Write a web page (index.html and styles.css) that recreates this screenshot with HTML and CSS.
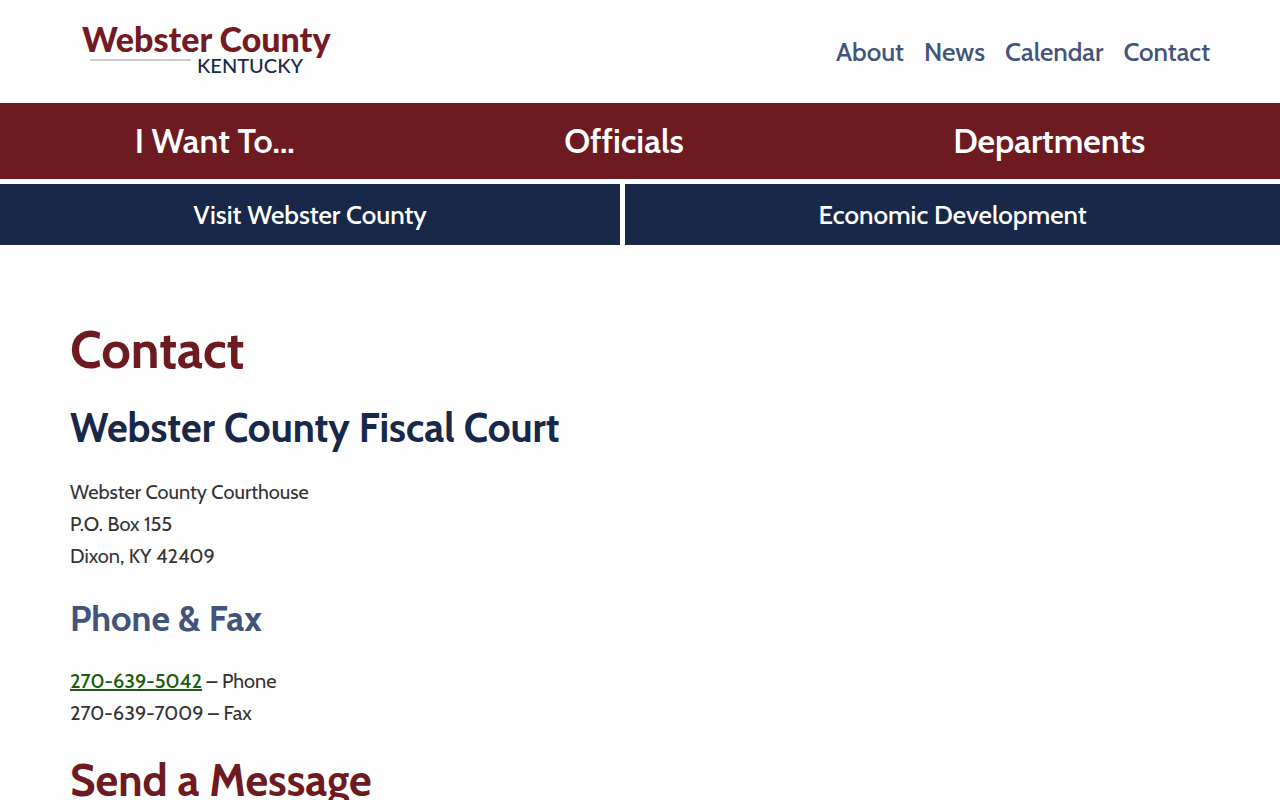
FILE: index.html
```
<!DOCTYPE html>
<html lang="en">
<head>
    <meta charset="UTF-8">
    <meta name="viewport" content="width=device-width, initial-scale=1.0">
    <title>Contact - Webster County, Kentucky</title>
    <link rel="stylesheet" href="styles.css">
</head>
<body>
    <header class="site-header">
        <a class="logo" href="#">
            <span class="logo-name">Webster County</span>
            <span class="logo-state">KENTUCKY</span>
        </a>
        <nav class="top-nav">
            <a href="#">About</a>
            <a href="#">News</a>
            <a href="#">Calendar</a>
            <a href="#">Contact</a>
        </nav>
    </header>

    <nav class="main-nav">
        <a href="#">I Want To...</a>
        <a href="#">Officials</a>
        <a href="#">Departments</a>
    </nav>

    <nav class="sub-nav">
        <a href="#">Visit Webster County</a>
        <a href="#">Economic Development</a>
    </nav>

    <main class="content">
        <h1>Contact</h1>
        <h2>Webster County Fiscal Court</h2>
        <p>Webster County Courthouse<br>
        P.O. Box 155<br>
        Dixon, KY 42409</p>
        <h3>Phone &amp; Fax</h3>
        <p><a href="tel:270-639-5042">270-639-5042</a> – Phone<br>
        270-639-7009 – Fax</p>
        <h2 class="form-title">Send a Message</h2>
    </main>
</body>
</html>
```

FILE: styles.css
```
* {
    box-sizing: border-box;
}

body {
    margin: 0;
    font-family: Cabin, Lato, sans-serif;
    font-size: 20px;
    line-height: 32px;
    color: #333;
    background: #fefefe;
}

a {
    text-decoration: none;
}

/* Header */
.site-header {
    display: flex;
    justify-content: space-between;
    align-items: center;
    padding: 24px 70px;
}

.logo {
    display: flex;
    flex-direction: column;
    padding: 0 0 2px 12px;
    font-family: Lato, sans-serif;
}

.logo-name {
    font-size: 34px;
    font-weight: 900;
    line-height: 30px;
    color: #731a22;
}

.logo-state {
    display: flex;
    align-items: flex-start;
    gap: 6px;
    padding-left: 8px;
    font-size: 20px;
    font-weight: 500;
    line-height: 23px;
    color: #1a2a4a;
}

/* grey rule in front of the state name */
.logo-state::before {
    content: "";
    width: 101px;
    height: 2px;
    margin-top: 5px;
    background: #ccc;
}

.top-nav {
    display: flex;
    gap: 20px;
}

.top-nav a {
    font-size: 26px;
    font-weight: 500;
    color: #43547a;
}

/* Main navigation */
.main-nav {
    display: flex;
    justify-content: space-around;
    padding: 14px 0;
    background: #6d1a20;
}

.main-nav a {
    font-size: 34px;
    font-weight: 600;
    line-height: 48px;
    color: #fff;
}

.sub-nav {
    display: flex;
    gap: 5px;
    margin-top: 5px;
}

.sub-nav a {
    flex: 1 1 auto;
    padding: 13px 10px 12px;
    font-size: 26px;
    font-weight: 500;
    line-height: 36px;
    text-align: center;
    color: #fff;
    background: #182848;
}

.main-nav a:hover,
.sub-nav a:hover,
.content a:hover {
    text-decoration: underline;
}

/* Content */
.content {
    padding: 75px 70px;
}

h1, h2, h3, p {
    margin: 0 0 20px;
}

h1 {
    font-size: 52px;
    line-height: 60px;
    color: #6d1a20;
}

h2 {
    font-size: 40px;
    line-height: 56px;
    color: #182848;
}

h3 {
    font-size: 36px;
    line-height: 53px;
    color: #43547a;
}

.content a {
    font-weight: 500;
    color: #1a5c10;
    text-decoration: underline;
}

.form-title {
    font-size: 44px;
    line-height: 64px;
    color: #6d1a20;
}
```
